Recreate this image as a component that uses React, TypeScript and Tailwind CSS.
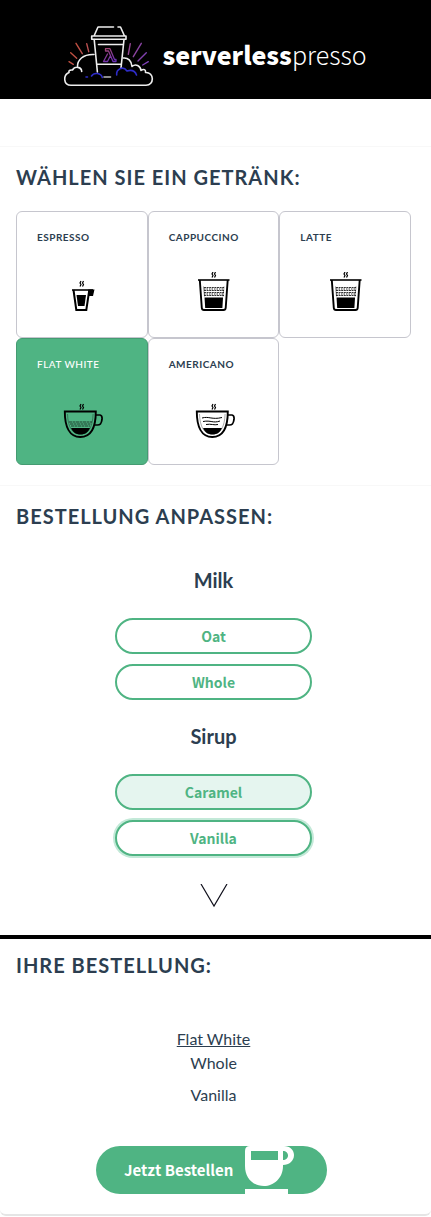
import { useState, type ReactNode } from "react";

const sans = "font-['Lato','Open_Sans',sans-serif]";
const humanist = "font-['Noto_Sans_CJK_JP','Noto_Sans',sans-serif]";

function Logo() {
  return (
    <svg viewBox="0 0 90 62" className="h-[62px] w-[90px] shrink-0" fill="none" strokeLinecap="round" strokeLinejoin="round" aria-hidden="true">
      <defs>
        <linearGradient id="rays" x1="4" y1="0" x2="84" y2="30" gradientUnits="userSpaceOnUse">
          <stop offset="0" stopColor="#c9502c" />
          <stop offset="0.5" stopColor="#ad4d67" />
          <stop offset="1" stopColor="#7c3fb5" />
        </linearGradient>
        <linearGradient id="lambda" x1="42" y1="23" x2="48" y2="37" gradientUnits="userSpaceOnUse">
          <stop offset="0" stopColor="#a34670" />
          <stop offset="1" stopColor="#6a30b8" />
        </linearGradient>
      </defs>
      <path
        stroke="url(#rays)"
        strokeWidth="1.4"
        d="M5 36.700l4.300 2.600M6.700 27.700l6 5.600M12 18.300l6.300 10.400M22.700 18.700l2 8M66.300 18.700l-2 10.600M77.300 18.300l-8 13.400M82.300 27.700l-8.300 8.300M84.300 36.700l-5.600 3.300"
      />
      <g stroke="#eee" strokeWidth="1.6">
        <path d="M30 29.500C19 29 13 35 13.500 42.500M17.700 46.500C17.500 42 11 40.500 8.500 45C4 44.500 5 47 5 47.500C-1 50 -1 60.300 7 60.300H82C90.500 60.300 90.500 47 81.500 47.500C82 44.500 79.500 43.500 77 45.500C76.500 40.500 71.500 38.500 68 41.500C67.500 35.500 64 32.500 59.300 33" />
        <path d="M49.500 2H34L30 11M54 2H56.500L60.500 11M27.700 11H62V14.200H27.700Z" />
        <path d="M30.200 14.500L33.400 47M60 14.500L57 43M34.500 19.500H58.500M33 39.300H57" />
      </g>
      <path stroke="#2e2cc8" strokeWidth="1.6" d="M27.500 51C30 47 37 48 38.300 52.500M22 52h1.500M52.700 50C52 44 59 40.500 63 46C68 44.500 71 46 72.500 50" />
      <path stroke="#bbb" strokeWidth="1.6" d="M40 52h6.500" />
      <path stroke="url(#lambda)" strokeWidth="1.300" d="M41.500 23.700H46L50.500 34.500H52V36.500H49L44.500 26H41.500ZM43.500 29L39.500 36.500H43.500L46 31.500" />
    </svg>
  );
}

const steam = <path d="M21 0l-1 2 1 1.500-1 2M23.500 0l-1 2 1 1.500-1 2" strokeWidth="1.2" />;

function EspressoIcon() {
  return (
    <g fill="none" stroke="#000">
      <g transform="translate(0 9)">{steam}</g>
      <path d="M12 18h21" strokeWidth="1.600" />
      <path d="M13.500 18l2.800 20h10l3-20" strokeWidth="2" />
      <path d="M28.500 17.500h6l-1.500 6.500h-5z" fill="#000" stroke="none" />
      <path d="M16.500 23h9.500l-1.500 11h-6.500z" fill="#000" stroke="none" />
    </g>
  );
}

function GlassIcon() {
  return (
    <g fill="none" stroke="#000">
      {steam}
      <path d="M6 8h31.500" strokeWidth="1.600" />
      <path d="M7.800 8l2 28q.2 2 2.200 2h19.500q2 0 2.200-2l2-28" strokeWidth="1.900" />
      <path d="M11.500 14.500l1 10M32 14.500l-1 10" strokeWidth="0.700" strokeOpacity="0.600" />
      <path d="M12 15.500h20M12 18.500h20M12 20.500h20M12 23.500h20" strokeWidth="0.800" strokeDasharray="2 .6" />
      <path d="M12 17h20M12 22h20" strokeWidth="1.600" strokeOpacity="0.550" strokeDasharray="1.500 1" />
      <path d="M12.500 25.500h18.500l-.6 10.500h-17.200z" fill="#000" stroke="none" />
    </g>
  );
}

function CupIcon({ plain }: { plain?: boolean }) {
  return (
    <g fill="none" stroke="#000">
      <g transform="translate(0 5)">{steam}</g>
      <path d="M4.800 12.500h31c0 15-4.500 25.500-15.500 25.500S4.800 27.500 4.800 12.500z" strokeWidth="1.900" />
      <path d="M36 16h4q2.500 .5 2 4.500c-.6 4-1.500 5.500-4.500 5.500h-3" strokeWidth="1.700" />
      <path d="M7.500 15c.5 13 4.500 20 12.800 20s12.300-7 12.800-20" strokeWidth="0.800" strokeOpacity="0.400" />
      {plain ? (
        <path d="M10 19c7-2 10 2 20-.5M11 22.500c8-1.500 10 2 17-.5M14 25.500c5-1 8 1 12 0" strokeWidth="1" />
      ) : (
        <path d="M9 23h23M10 25h21M11 27h19" strokeWidth="1.200" strokeOpacity="0.650" strokeDasharray="3 .5" />
      )}
      <path d="M11 29h19c-2 4.500-5 6.500-9.500 6.500s-7.500-2-9.500-6.500z" fill="#000" stroke="none" />
    </g>
  );
}

const drinks: { name: string; icon: ReactNode }[] = [
  { name: "Espresso", icon: <EspressoIcon /> },
  { name: "Cappuccino", icon: <GlassIcon /> },
  { name: "Latte", icon: <GlassIcon /> },
  { name: "Flat White", icon: <CupIcon /> },
  { name: "Americano", icon: <CupIcon plain /> },
];

function Heading({ children }: { children: ReactNode }) {
  return <h2 className="text-xl leading-6 font-bold tracking-wider text-[#2c3e50] uppercase">{children}</h2>;
}

function Option({ name, state, onClick }: { name: string; state: "idle" | "hover" | "chosen"; onClick: () => void }) {
  const look = {
    idle: "bg-white",
    hover: "bg-[#e5f5ef]",
    chosen: "bg-white ring-2 ring-[#c3e9d8]",
  }[state];
  return (
    <button
      type="button"
      onClick={onClick}
      className={`${humanist} ${look} h-9 w-full rounded-full border-2 border-[#4fb483] pb-px text-sm leading-5 font-bold text-[#4fb483]`}
    >
      {name}
    </button>
  );
}

function OrderCup() {
  return (
    <svg viewBox="0 0 50 48" className="h-12 w-[50px] shrink-0" aria-hidden="true">
      <path fill="#fff" d="M0 5Q0 0 5 0H39C45 0 49 4 49 9C49 15 44 19 38 19V20C38 32 29 40 19 40C8 40 0 32 0 20ZM6 5V14H33V5ZM38 5V14C41 14 43 12 43 9.500C43 7 41 5 38 5ZM0 43H43V48H0Z" fillRule="evenodd" />
    </svg>
  );
}

export default function App() {
  const [drink, setDrink] = useState("Flat White");
  const [milk, setMilk] = useState("Whole");
  const [syrup, setSyrup] = useState("Vanilla");

  return (
    <div className={`${sans} bg-white text-[#2c3e50]`}>
      <header className="flex h-[99px] items-center justify-center bg-black">
        <div className={`${humanist} flex items-center gap-2 pt-3 text-white`}>
          <Logo />
          <h1 className="pb-1 text-[25px] leading-8 font-black">
            serverless<span className="font-light">presso</span>
          </h1>
        </div>
      </header>

      <main className="mt-[47px] rounded-b-md border-t border-b-2 border-t-[#f8f8f8] border-b-[#e5e5e5]">
        <section className="pt-[18px] pr-5 pb-5 pl-4">
          <Heading>Wählen Sie ein Getränk:</Heading>
          <div className="mt-[22px] grid grid-cols-3">
            {drinks.map(({ name, icon }) => (
              <button
                key={name}
                type="button"
                onClick={() => setDrink(name)}
                className={`flex h-[127px] flex-col rounded-md border px-5 pt-[19px] text-left ${
                  drink === name
                    ? "border-[#459b72] bg-[#4fb483] font-medium text-white"
                    : "border-[#c6c6ce] bg-white font-bold"
                }`}
              >
                <span className="text-[10px] leading-3 tracking-wider uppercase">{name}</span>
                <svg viewBox="0 0 43 40" className="mt-[29px] h-10 w-[43px] self-center" aria-hidden="true">
                  {icon}
                </svg>
              </button>
            ))}
          </div>
        </section>

        <section className="border-t border-[#f8f8f8] pt-[18px]">
          <div className="pr-5 pl-4">
            <Heading>Bestellung anpassen:</Heading>
          </div>
          <div className="pr-1">
            <div className="mx-auto mt-9 flex w-[197px] flex-col text-center">
              <h3 className="text-xl leading-8 font-bold">Milk</h3>
              <div className="mt-[22px] flex flex-col gap-[10px]">
                {["Oat", "Whole"].map((name) => (
                  <Option key={name} name={name} state="idle" onClick={() => setMilk(name)} />
                ))}
              </div>
              <h3 className="mt-5 text-xl leading-8 font-bold">Sirup</h3>
              <div className="mt-[22px] flex flex-col gap-[10px]">
                {["Caramel", "Vanilla"].map((name) => (
                  <Option key={name} name={name} state={syrup === name ? "chosen" : "hover"} onClick={() => setSyrup(name)} />
                ))}
              </div>
              <svg viewBox="0 0 28 24" className="mt-7 mb-[27px] h-6 w-7 self-center" fill="none" stroke="#10101c" strokeWidth="1.2" aria-hidden="true">
                <path d="M1 0L14 22L27 0" />
              </svg>
            </div>
          </div>
        </section>

        <section className="border-t-4 border-black pt-[14px] pb-5">
          <div className="pr-5 pl-4">
            <Heading>Ihre Bestellung:</Heading>
          </div>
          <div className="mt-[50px] flex flex-col pr-1 text-center text-base leading-6">
            <p className="underline">{drink}</p>
            <p>{milk}</p>
            <p className="mt-2">{syrup}</p>
          </div>
          <div className="mt-[39px] flex justify-center pr-2">
            <button type="button" className={`${humanist} flex h-12 w-[231px] items-center gap-3 rounded-full bg-[#4fb483] pl-7 text-[15px] leading-6 font-bold text-white`}>
              <span>Jetzt Bestellen</span>
              <OrderCup />
            </button>
          </div>
        </section>
      </main>
    </div>
  );
}
